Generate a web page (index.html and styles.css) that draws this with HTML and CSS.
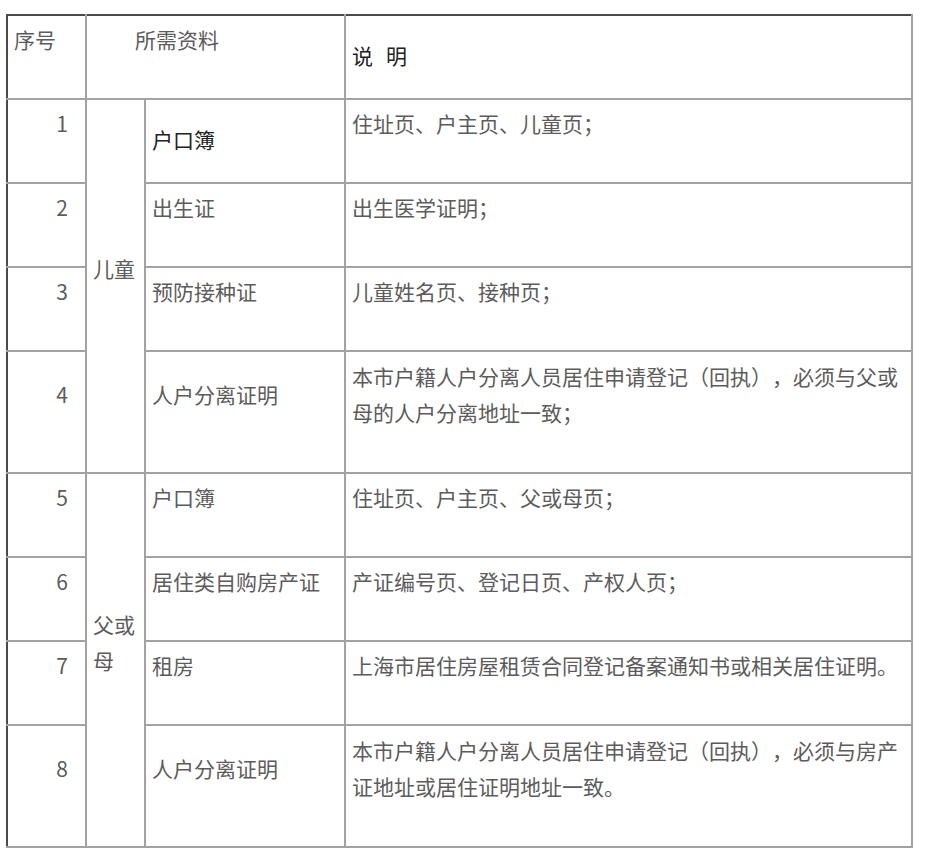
FILE: index.html
```html
<!DOCTYPE html>
<html lang="zh-CN">
<head>
<meta charset="utf-8">
<title>所需资料</title>
<link rel="stylesheet" href="styles.css">
</head>
<body>
<table class="docs">
  <colgroup>
    <col class="c-no">
    <col class="c-who">
    <col class="c-item">
    <col class="c-desc">
  </colgroup>
  <tr class="row row-head">
    <td class="first"><p>序号</p></td>
    <td class="head-mat" colspan="2"><p>所需资料</p></td>
    <td class="strong head-desc">说明</td>
  </tr>
  <tr class="row">
    <td class="first num"><p>1</p></td>
    <td class="who" rowspan="4"><p>儿童</p></td>
    <td class="strong">户口簿</td>
    <td><p>住址页、户主页、儿童页；</p></td>
  </tr>
  <tr class="row">
    <td class="first num"><p>2</p></td>
    <td><p>出生证</p></td>
    <td><p>出生医学证明；</p></td>
  </tr>
  <tr class="row">
    <td class="first num"><p>3</p></td>
    <td><p>预防接种证</p></td>
    <td><p>儿童姓名页、接种页；</p></td>
  </tr>
  <tr class="row row-tall">
    <td class="first num"><p>4</p></td>
    <td><p>人户分离证明</p></td>
    <td><p>本市户籍人户分离人员居住申请登记（回执），必须与父或母的人户分离地址一致；</p></td>
  </tr>
  <tr class="row">
    <td class="first num"><p>5</p></td>
    <td class="who" rowspan="4"><p>父或母</p></td>
    <td><p>户口簿</p></td>
    <td><p>住址页、户主页、父或母页；</p></td>
  </tr>
  <tr class="row">
    <td class="first num"><p>6</p></td>
    <td><p>居住类自购房产证</p></td>
    <td><p>产证编号页、登记日页、产权人页；</p></td>
  </tr>
  <tr class="row">
    <td class="first num"><p>7</p></td>
    <td><p>租房</p></td>
    <td><p>上海市居住房屋租赁合同登记备案通知书或相关居住证明。</p></td>
  </tr>
  <tr class="row row-tall">
    <td class="first num"><p>8</p></td>
    <td><p>人户分离证明</p></td>
    <td><p>本市户籍人户分离人员居住申请登记（回执），必须与房产证地址或居住证明地址一致。</p></td>
  </tr>
</table>
</body>
</html>
```

FILE: styles.css
```css
html, body {
  margin: 0;
  padding: 0;
  background: #ffffff;
}

body {
  font-family: "Noto Sans CJK SC", "Noto Sans", sans-serif;
}

.docs {
  border-collapse: collapse;
  table-layout: fixed;
  width: 905px;
  margin: 14px 0 0 6px;
  font-size: 21px;
  color: #5c5c5c;
  text-spacing-trim: space-all;
}

.c-no { width: 79px; }
.c-who { width: 59px; }
.c-item { width: 200px; }
.c-desc { width: 567px; }

.docs td {
  border: 2px solid #a2a2a2;
  padding: 0 6px;
  vertical-align: middle;
  line-height: 36px;
}

.docs p {
  margin: 0 0 36px;
  line-height: 36px;
}

.row { height: 84px; }
.row-tall { height: 122px; }

.row-head td {
  border-top-color: #4a4a4a;
}

.docs td.first {
  border-left-color: #4a4a4a;
}

.docs td.num {
  text-align: right;
  padding-right: 17px;
}

.docs td.head-mat {
  padding-left: 48px;
}

.docs td.strong {
  color: #222222;
  padding-bottom: 4px;
}

.docs td.head-desc {
  letter-spacing: 13px;
}
```
